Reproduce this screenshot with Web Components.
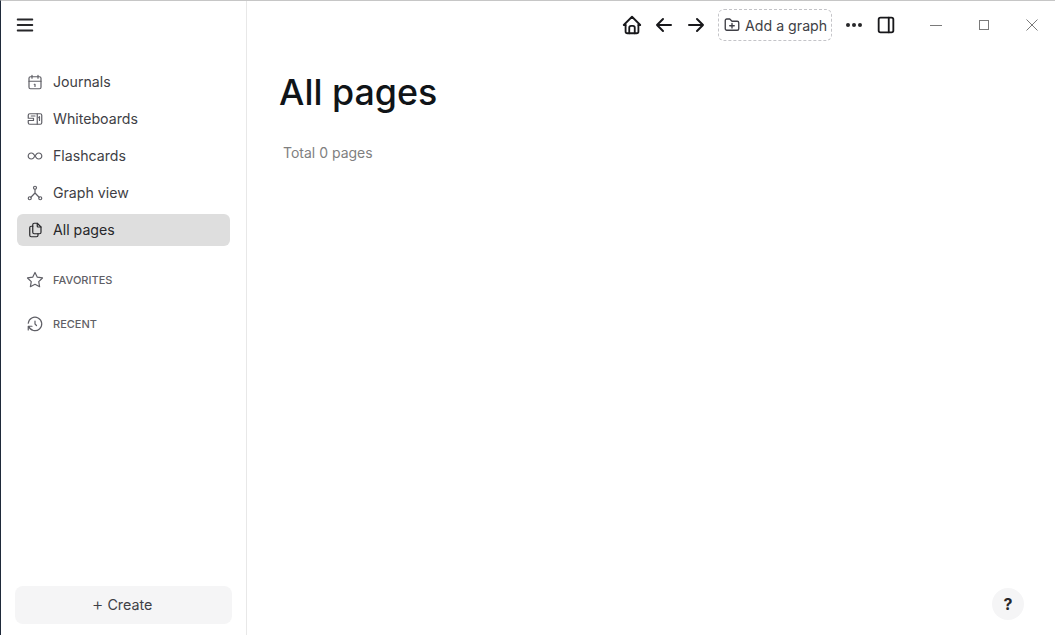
<!DOCTYPE html>
<html>
<head>
<meta charset="utf-8">
<title>All pages</title>
<style>
  html, body { margin: 0; height: 100%; background: #fff; overflow: hidden; }
  body { font-family: Inter, "Liberation Sans", sans-serif; }
</style>
</head>
<body>
<app-shell>
  <side-bar slot="side">
    <nav-item label="Journals" icon="calendar"></nav-item>
    <nav-item label="Whiteboards" icon="board"></nav-item>
    <nav-item label="Flashcards" icon="infinity"></nav-item>
    <nav-item label="Graph view" icon="graph"></nav-item>
    <nav-item label="All pages" icon="files" active></nav-item>
    <nav-section slot="sections" label="FAVORITES" icon="star"></nav-section>
    <nav-section slot="sections" label="RECENT" icon="history"></nav-section>
  </side-bar>
  <top-bar slot="top"></top-bar>
  <all-pages slot="main"></all-pages>
</app-shell>
<help-button></help-button>

<script>
const ICONS = {
  menu: '<path d="M4 6h16M4 12h16M4 18h16"/>',
  calendar: '<path d="M4 7a2 2 0 0 1 2-2h12a2 2 0 0 1 2 2v12a2 2 0 0 1-2 2H6a2 2 0 0 1-2-2z"/><path d="M16 3v4M8 3v4M4 11h16M11 15h1v3"/>',
  board: '<path d="M5 5h14a2 2 0 0 1 2 2v10a2 2 0 0 1-2 2H5a2 2 0 0 1-2-2v-3h7v-3H3V7a2 2 0 0 1 2-2z"/><path d="M7 8h5M15 5v14M17 10l1-1v5"/>',
  infinity: '<path d="M9.8 9.2a4 4 0 1 0 0 5.6L12 12l2.2-2.8a4 4 0 1 1 0 5.6L12 12z"/>',
  graph: '<circle cx="12" cy="5" r="2"/><circle cx="5" cy="19" r="2"/><circle cx="19" cy="19" r="2"/><path d="M12 7v5M6.5 17.7 12 12l5.5 5.7"/>',
  files: '<path d="M15 3v4a1 1 0 0 0 1 1h4"/><path d="M18 17h-7a2 2 0 0 1-2-2V5a2 2 0 0 1 2-2h4l5 5v7a2 2 0 0 1-2 2z"/><path d="M16 17v2a2 2 0 0 1-2 2H7a2 2 0 0 1-2-2V9a2 2 0 0 1 2-2h2"/>',
  star: '<path d="m12 17.75-6.17 3.24 1.18-6.87-5-4.86 6.9-1L12 2l3.09 6.26 6.9 1-5 4.86 1.18 6.87z"/>',
  history: '<path d="M12 8v4l2 2"/><path d="M3.05 11a9 9 0 1 1 .5 4M3 20v-5h5"/>',
  home: '<path d="M5 12H3l9-9 9 9h-2"/><path d="M5 12v7a2 2 0 0 0 2 2h10a2 2 0 0 0 2-2v-7"/><path d="M9 21v-6a2 2 0 0 1 2-2h2a2 2 0 0 1 2 2v6"/>',
  left: '<path d="M5 12h14M5 12l6 6M5 12l6-6"/>',
  right: '<path d="M5 12h14M13 18l6-6M13 6l6 6"/>',
  folder: '<path d="M12 19H5a2 2 0 0 1-2-2V6a2 2 0 0 1 2-2h4l3 3h7a2 2 0 0 1 2 2v8a2 2 0 0 1-2 2z"/><path d="M12 10v6M9 13h6"/>',
  panel: '<rect x="4" y="4" width="16" height="16" rx="2"/><path d="M15 4v16"/>'
};

function svg(name, size, width) {
  return `<svg width="${size}" height="${size}" viewBox="0 0 24 24" fill="none" stroke="currentColor" stroke-width="${width}" stroke-linecap="round" stroke-linejoin="round">${ICONS[name]}</svg>`;
}

class AppShell extends HTMLElement {
  constructor() {
    super();
    this.attachShadow({ mode: "open" });
    this.shadowRoot.innerHTML = `
    <style>
      :host {
        display: flex;
        height: 635px;
        box-sizing: border-box;
        border-top: 1px solid #c6c6c6;
        border-left: 1px solid #1f2a3a;
      }
      #right { flex: 1; display: flex; flex-direction: column; min-width: 0; }
    </style>
    <slot name="side"></slot>
    <div id="right">
      <slot name="top"></slot>
      <slot name="main"></slot>
    </div>`;
  }
}

class SideBar extends HTMLElement {
  constructor() {
    super();
    this.attachShadow({ mode: "open" });
    this.shadowRoot.innerHTML = `
    <style>
      :host {
        display: flex;
        flex-direction: column;
        width: 246px;
        box-sizing: border-box;
        border-right: 1px solid #e8e8e8;
        flex: none;
        font-family: Inter, "Liberation Sans", sans-serif;
      }
      #head { height: 48px; padding-left: 13px; display: flex; align-items: center; color: #27272a; }
      svg { display: block; }
      #items { display: flex; flex-direction: column; gap: 5px; padding: 17px 16px 0 16px; }
      #sections { display: flex; flex-direction: column; gap: 16px; padding: 20px 16px 0 16px; }
      #create {
        margin: auto 14px 11px 14px;
        height: 38px;
        box-sizing: border-box;
        padding-right: 3px;
        background: #f5f5f6;
        border-radius: 8px;
        display: flex;
        align-items: center;
        justify-content: center;
        gap: 4px;
        font-size: 14.3px;
        color: #3f3f46;
      }
      #create span { padding-bottom: 1px; }
      #create span:first-child { font-size: 18px; line-height: 20px; font-weight: 300; }
    </style>
    <div id="head">${svg("menu", 22, 2)}</div>
    <div id="items"><slot></slot></div>
    <div id="sections"><slot name="sections"></slot></div>
    <div id="create"><span>+</span><span>Create</span></div>`;
  }
}

class NavItem extends HTMLElement {
  constructor() {
    super();
    this.attachShadow({ mode: "open" });
    const icon = this.getAttribute("icon");
    this.shadowRoot.innerHTML = `
    <style>
      :host {
        display: flex;
        align-items: center;
        height: 32px;
        width: 213px;
        box-sizing: border-box;
        padding-left: 9px;
        gap: 9px;
        border-radius: 6px;
        font-size: 14.15px;
        color: #3f3f46;
      }
      :host([active]) { background: #dedede; color: #27272a; }
      span { padding-bottom: 2px; }
      svg { display: block; color: #5f5f66; }
      :host([active]) svg { color: #27272a; }
    </style>
    ${svg(icon, 18, 1.6)}<span>${this.getAttribute("label")}</span>`;
  }
}

class NavSection extends HTMLElement {
  constructor() {
    super();
    this.attachShadow({ mode: "open" });
    this.shadowRoot.innerHTML = `
    <style>
      :host {
        display: flex;
        align-items: center;
        height: 28px;
        padding-left: 9px;
        gap: 9px;
        font-size: 11px;
        font-weight: 500;
        color: #5f5f66;
      }
      svg { display: block; }
    </style>
    ${svg(this.getAttribute("icon"), 18, 1.6)}<span>${this.getAttribute("label")}</span>`;
  }
}

class TopBar extends HTMLElement {
  constructor() {
    super();
    this.attachShadow({ mode: "open" });
    const btn = (name, size) => `<div class="btn">${svg(name, size, 2)}</div>`;
    this.shadowRoot.innerHTML = `
    <style>
      :host {
        display: flex;
        align-items: center;
        justify-content: flex-end;
        height: 48px;
        flex: none;
        color: #18181b;
        font-family: Inter, "Liberation Sans", sans-serif;
      }
      svg { display: block; }
      .btn { width: 32px; height: 32px; display: flex; align-items: center; justify-content: center; }
      #add {
        width: 114px;
        height: 32px;
        box-sizing: border-box;
        margin: 0 6px;
        border: 1px dashed #c4c4c8;
        border-radius: 6px;
        display: flex;
        align-items: center;
        padding-left: 4px;
        gap: 4px;
        font-size: 14.2px;
        color: #3f3f46;
        white-space: nowrap;
      }
      #dots { display: flex; gap: 2px; }
      #dots i { width: 4px; height: 4px; border-radius: 50%; background: #27272a; display: block; }
      #win { display: flex; margin-left: 10px; margin-right: -1px; color: #7a7a7a; }
      #win div { width: 48px; height: 32px; display: flex; align-items: center; justify-content: center; }
    </style>
    ${btn("home", 22)}${btn("left", 24)}${btn("right", 24)}
    <div id="add">${svg("folder", 18, 1.8)}<span>Add a graph</span></div>
    <div class="btn"><div id="dots"><i></i><i></i><i></i></div></div>
    ${btn("panel", 22)}
    <div id="win">
      <div><svg width="12" height="12" viewBox="0 0 12 12" stroke="currentColor" fill="none"><path d="M0 6.5h12"/></svg></div>
      <div><svg width="10" height="10" viewBox="0 0 10 10" stroke="currentColor" fill="none"><rect x=".5" y=".5" width="9" height="9"/></svg></div>
      <div><svg width="12" height="12" viewBox="0 0 12 12" stroke="currentColor" fill="none"><path d="M.5.5l11 11M11.5.5l-11 11"/></svg></div>
    </div>`;
  }
}

class AllPages extends HTMLElement {
  constructor() {
    super();
    this.attachShadow({ mode: "open" });
    this.shadowRoot.innerHTML = `
    <style>
      :host { display: block; padding: 20px 0 0 32px; font-family: Inter, "Liberation Sans", sans-serif; }
      h1 { margin: 0; font-size: 35.8px; line-height: 46px; font-weight: 500; color: #101418; }
      p { margin: 28px 0 0 4px; font-size: 14px; line-height: 20px; color: #7f7f7f; }
    </style>
    <h1>All pages</h1>
    <p>Total 0 pages</p>`;
  }
}

class HelpButton extends HTMLElement {
  constructor() {
    super();
    this.attachShadow({ mode: "open" });
    this.shadowRoot.innerHTML = `
    <style>
      :host {
        position: fixed;
        left: 992px;
        top: 588px;
        width: 32px;
        height: 32px;
        border-radius: 50%;
        background: #f5f5f6;
        display: flex;
        align-items: center;
        justify-content: center;
        font: 700 16px Inter, "Liberation Sans", sans-serif;
        color: #27272a;
      }
    </style>?`;
  }
}

customElements.define("app-shell", AppShell);
customElements.define("side-bar", SideBar);
customElements.define("nav-item", NavItem);
customElements.define("nav-section", NavSection);
customElements.define("top-bar", TopBar);
customElements.define("all-pages", AllPages);
customElements.define("help-button", HelpButton);
</script>
</body>
</html>
